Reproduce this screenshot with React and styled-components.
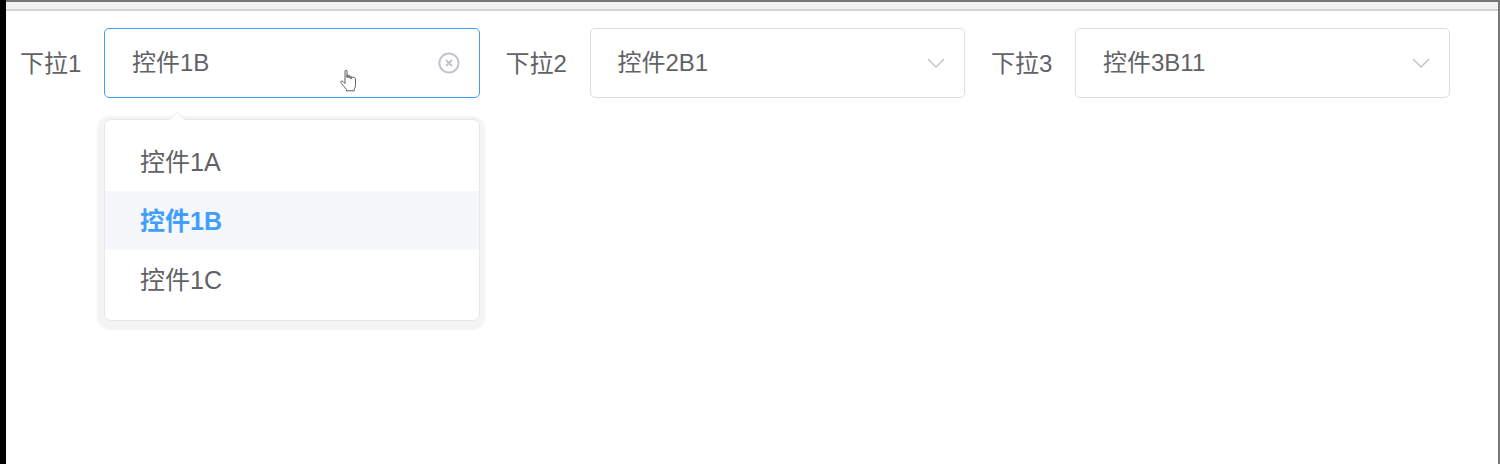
import React from "react";
import styled, { createGlobalStyle } from "styled-components";

const GlobalStyle = createGlobalStyle`
html, body {
    margin: 0;
    padding: 0;
    background: #fff;
}
body {
    font-family: "Liberation Sans", "Noto Sans CJK SC", sans-serif;
    color: #606266;
}
`;

const Window = styled.div`
display: flex;
width: 1500px;
height: 464px;
overflow: hidden;
background: #fff;
`;
const LeftEdge = styled.div`
flex: none;
width: 6px;
background: #000;
`;
const Page = styled.div`
flex: 1;
display: flex;
flex-direction: column;
border-right: 2px solid #777;
`;
const TopBar = styled.div`
flex: none;
height: 7px;
background: #f2f2f2;
border-top: 2px solid #777;
border-bottom: 2px solid #d2d2d2;
`;
const Form = styled.div`
display: grid;
grid-template-columns: repeat(3, 485.5px);
padding: 17px 0 0 14px;
`;
const FormItem = styled.div`
position: relative;
display: flex;
align-items: center;
`;
const Label = styled.label`
flex: none;
width: 84px;
font-size: 24px;
line-height: 68px;
margin-top: 1px;
`;
const Select = styled.div`
box-sizing: border-box;
flex: none;
display: flex;
align-items: center;
justify-content: space-between;
width: ${(props) => (props.$focused ? "376px" : "375.2px")};
height: 70px;
padding: 0 18px 0 27px;
background: #fff;
border: 1px solid ${(props) => (props.$focused ? "#409eff" : "#dcdfe6")};
border-radius: 5px;
`;
const Value = styled.span`
font-size: 24px;
line-height: 66px;
`;
const Icon = styled.svg`
flex: none;
display: block;
fill: none;
stroke: #c0c4cc;
`;
const Menu = styled.ul`
position: absolute;
top: 91px;
left: 84px;
box-sizing: border-box;
width: 375.5px;
height: 202px;
margin: 0;
padding: 12px 0;
list-style: none;
background: #fff;
border: 1px solid #e4e7ed;
border-radius: 7px;
box-shadow: -1px 3px 2px 6px #f4f4f5;
&::before {
    content: "";
    position: absolute;
    top: -6px;
    left: 66px;
    width: 12px;
    height: 12px;
    background: #fff;
    border-top: 1px solid #eceef1;
    border-left: 1px solid #eceef1;
    box-sizing: border-box;
    transform: rotate(45deg);
}
`;
const Option = styled.li`
position: relative;
height: 59px;
padding-left: 35px;
font-size: 25px;
line-height: 61px;
color: ${(props) => (props.$active ? "#409eff" : "#606266")};
font-weight: ${(props) => (props.$active ? 700 : 400)};
background: ${(props) => (props.$active ? "#f5f7fa" : "transparent")};
`;
const Cursor = styled.svg`
position: absolute;
top: 41px;
left: 320px;
width: 19px;
height: 23px;
`;

const ClearIcon = () => (
    <Icon width="24" height="24" viewBox="0 0 24 24" strokeWidth="2">
        <circle cx="12" cy="12" r="9.6" />
        <path d="M9 9l6 6M15 9l-6 6" />
    </Icon>
);

const ArrowIcon = () => (
    <Icon width="20" height="12" viewBox="0 0 20 12" strokeWidth="1.5">
        <path d="M2 2l8 8 8-8" />
    </Icon>
);

const HandCursor = () => (
    <Cursor viewBox="0 0 19 23">
        <path
            d="M5 8V2.2C5 .8 7 .8 7 2.2V8.5V6.8C7 5.8 9 5.8 9 6.8V9V7.6C9 6.6 11 6.6 11 7.6V10V8.8C11 7.8 15.5 8 15.5 9.8V15.5C15.5 18 14.8 19 14.2 20.5V21.8H6.5V20.5C5 18.5 1.2 14.5 .9 13.5C.6 12 2 11.5 3 12.5L5 14.5Z"
            fill="#fff"
            stroke="#333"
            strokeWidth="0.8"
            strokeLinejoin="round"
        />
    </Cursor>
);

const options = ["控件1A", "控件1B", "控件1C"];

const App = () => {
    return (
        <Window>
            <GlobalStyle />
            <LeftEdge />
            <Page>
                <TopBar />
                <Form>
                    <FormItem>
                        <Label>下拉1</Label>
                        <Select $focused>
                            <Value>控件1B</Value>
                            <ClearIcon />
                        </Select>
                        <HandCursor />
                        <Menu>
                            {options.map((option) => (
                                <Option key={option} $active={option === "控件1B"}>
                                    {option}
                                </Option>
                            ))}
                        </Menu>
                    </FormItem>
                    <FormItem>
                        <Label>下拉2</Label>
                        <Select>
                            <Value>控件2B1</Value>
                            <ArrowIcon />
                        </Select>
                    </FormItem>
                    <FormItem>
                        <Label>下拉3</Label>
                        <Select>
                            <Value>控件3B11</Value>
                            <ArrowIcon />
                        </Select>
                    </FormItem>
                </Form>
            </Page>
        </Window>
    );
};
export default App;
